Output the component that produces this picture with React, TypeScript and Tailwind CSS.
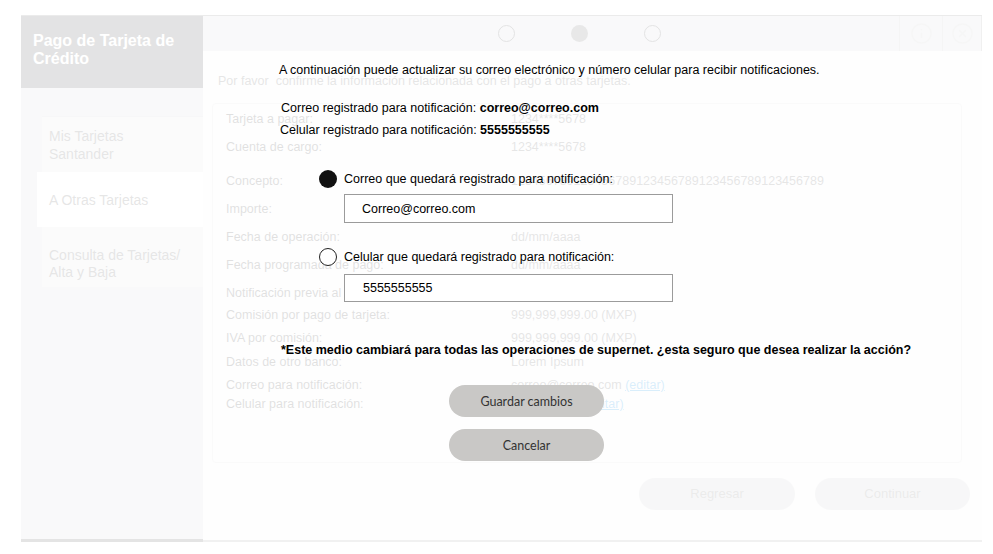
import React from "react";
import { Info, CircleX } from "lucide-react";

const rows = [
	{ label: "Tarjeta a pagar:", value: "1234****5678", mt: "mt-0" },
	{ label: "Cuenta de cargo:", value: "1234****5678", mt: "mt-[8px]" },
	{ label: "Concepto:", value: "123456789123456789123456789123456789123456789", mt: "mt-[14px]" },
	{ label: "Importe:", value: "999,999,999.00 (MXP)", mt: "mt-[8px]" },
	{ label: "Fecha de operación:", value: "dd/mm/aaaa", mt: "mt-[8px]" },
	{ label: "Fecha programada de pago:", value: "dd/mm/aaaa", mt: "mt-[8px]" },
	{ label: "Notificación previa al pago:", value: "3 días", mt: "mt-[8px]" },
	{ label: "Comisión por pago de tarjeta:", value: "999,999,999.00 (MXP)", mt: "mt-[2px]" },
	{ label: "IVA por comisión:", value: "999,999,999.00 (MXP)", mt: "mt-[3px]" },
	{ label: "Datos de otro banco:", value: "Lorem Ipsum", mt: "mt-[4px]" },
	{ label: "Correo para notificación:", value: "correo@correo.com", edit: true, mt: "mt-[3px]" },
	{ label: "Celular para notificación:", value: "5555555555", edit: true, mt: "-mt-[1px]" },
];

const Sidebar = () => (
	<aside className="w-[182px] shrink-0 bg-[#d5d7dc] border-b-[3px] border-[#4a4a4a] flex flex-col">
		<div className="h-[72px] bg-[#474749] pl-[12px] pt-[16px] text-white font-bold text-[16px] leading-[18px]">
			Pago de Tarjeta de<br />Crédito
		</div>

		<nav className="mt-[28px] flex flex-col text-[14px] leading-[18px] text-[#555]">
			<div className="ml-[21px] h-[56px] bg-[#e1e3e7] border-t border-[#c9ccd2] pl-[7px] pt-[10px]">
				Mis Tarjetas<br />Santander
			</div>
			<div className="ml-[16px] h-[55px] bg-white pl-[12px] flex items-center">
				A Otras Tarjetas
			</div>
			<div className="ml-[21px] h-[60px] bg-[#e1e3e7] pl-[7px] pt-[20px] leading-[17px]">
				Consulta de Tarjetas/<br />Alta y Baja
			</div>
		</nav>
	</aside>
);

const Steps = () => (
	<div className="flex items-center gap-[56px] pl-[295px]">
		<span className="w-[17px] h-[17px] rounded-full border border-[#444]" />
		<span className="w-[17px] h-[17px] rounded-full bg-[#666]" />
		<span className="w-[17px] h-[17px] rounded-full border border-[#444]" />
	</div>
);

const Main = () => (
	<main className="flex-1 flex flex-col bg-[#f5f5f6] border-b-2 border-[#a0a0a0]">
		<div className="h-[35px] bg-[#d4d6dc] flex items-center border-r border-[#9a9a9a]">
			<Steps />
			<div className="ml-auto flex h-full">
				<div className="w-[43px] h-full border-l border-[#bbb] flex items-center justify-center">
					<Info size={23} strokeWidth={1.5} color="#c4c4c4" />
				</div>
				<div className="w-[39px] h-full border-l border-[#bbb] flex items-center justify-center">
					<CircleX size={23} strokeWidth={1.5} color="#c4c4c4" />
				</div>
			</div>
		</div>

		<p className="mt-[20px] ml-[15px] text-[12.5px] leading-[20px] text-[#555]">
			Por favor&nbsp; confirme la información relacionada con el pago a otras tarjetas.
		</p>

		<div className="mt-[12px] ml-[9px] mr-[20px] h-[360px] bg-[#f9f9fb] border border-[#dcdcdc] rounded-sm pt-[5px] pl-[13px] flex flex-col text-[12.5px] leading-[20px]">
			{rows.map((row, indx) => (
				<div key={indx} className={`flex ${row.mt}`}>
					<div className="w-[285px] text-[#333]">{row.label}</div>
					<div className="text-[#555]">
						{row.value}
						{row.edit && (
							<span> <span className="text-[#028de4] underline">(editar)</span></span>
						)}
					</div>
				</div>
			))}
		</div>

		<div className="mt-[15px] mr-[12px] flex justify-end gap-[20px] text-[13px] text-[#777]">
			<button className="w-[156px] h-[32px] rounded-full bg-[#cbccd1]">Regresar</button>
			<button className="w-[155px] h-[32px] rounded-full bg-[#cbccd1]">Continuar</button>
		</div>
	</main>
);

const Modal = () => (
	<div className="absolute left-[279px] top-[60px] w-[660px] flex flex-col text-[12.5px] leading-[20px] text-black">
		<p>A continuación puede actualizar su correo electrónico y número celular para recibir notificaciones.</p>

		<p className="mt-[18px] ml-[2px]">
			Correo registrado para notificación: <b>correo@correo.com</b>
		</p>
		<p className="mt-[2px] ml-[1px]">
			Celular registrado para notificación: <b>5555555555</b>
		</p>

		<label className="mt-[29px] ml-[40px] flex items-center gap-[7px]">
			<span className="w-[18px] h-[18px] rounded-full bg-[#111]" />
			Correo que quedará registrado para notificación:
		</label>
		<div className="mt-[5px] ml-[65px] w-[329px] h-[29px] border border-[#9b9b9b] bg-white pl-[17px] flex items-center">
			Correo@correo.com
		</div>

		<label className="mt-[24px] ml-[40px] flex items-center gap-[7px]">
			<span className="w-[18px] h-[18px] rounded-full border-[1.5px] border-[#222] bg-white" />
			Celular que quedará registrado para notificación:
		</label>
		<div className="mt-[7px] ml-[65px] w-[329px] h-[28px] border border-[#9b9b9b] bg-white pl-[18px] flex items-center">
			5555555555
		</div>

		<p className="mt-[38px] ml-[2px] font-bold">
			*Este medio cambiará para todas las operaciones de supernet. ¿esta seguro que desea realizar la acción?
		</p>

		<button className="mt-[25px] ml-[170px] w-[155px] h-[32px] pt-[2px] rounded-full bg-[#c9c8c6] text-[#333] text-[12.5px] font-['Lato',sans-serif]">
			Guardar cambios
		</button>
		<button className="mt-[12px] ml-[170px] w-[155px] h-[32px] pt-[2px] rounded-full bg-[#c9c8c6] text-[#333] text-[12.5px] font-['Lato',sans-serif]">
			Cancelar
		</button>
	</div>
);

export default function App() {
	return (
		<div className="relative min-h-[554px] bg-white font-['Liberation_Sans',Arial,sans-serif]">
			<div className="pt-[15px] pl-[21px]">
				<div className="flex w-[961px] h-[527px] border-t border-[#777]">
					<Sidebar />
					<Main />
				</div>
			</div>

			{/* modal overlay */}
			<div className="absolute inset-0 bg-white/85" />
			<Modal />
		</div>
	);
}
